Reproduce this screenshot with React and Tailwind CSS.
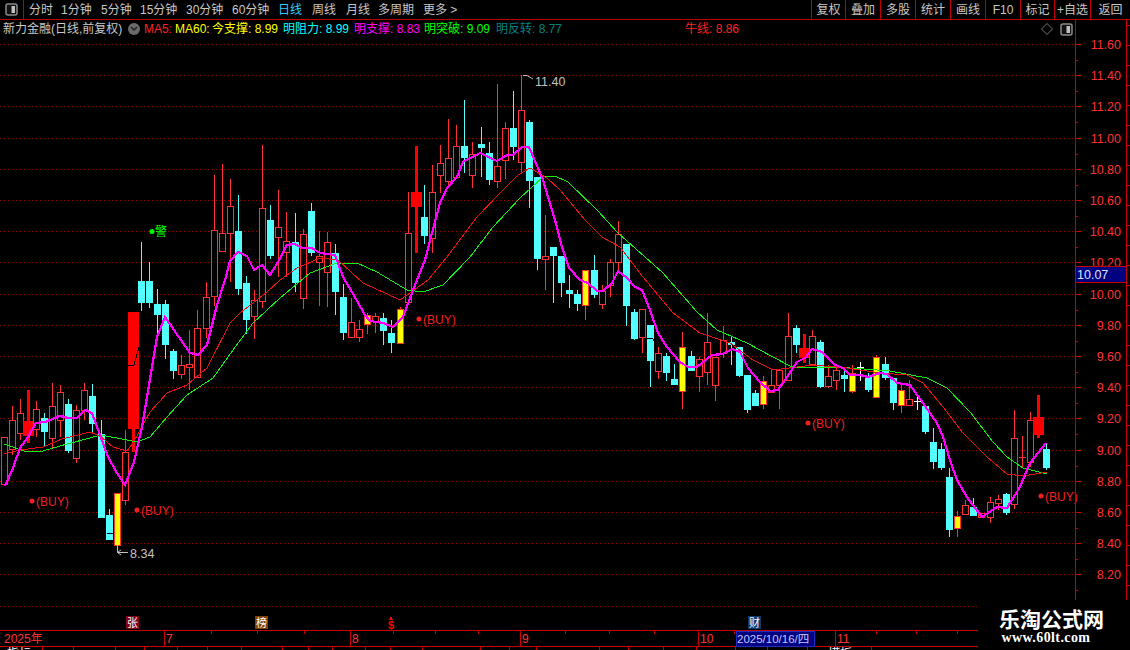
const tabs = [
  ["分时", "w-[32px]", "text-[#c8c8c8]"],
  ["1分钟", "w-[40px]", "text-[#c8c8c8]"],
  ["5分钟", "w-[39px]", "text-[#c8c8c8]"],
  ["15分钟", "w-[46px]", "text-[#c8c8c8]"],
  ["30分钟", "w-[46px]", "text-[#c8c8c8]"],
  ["60分钟", "w-[46px]", "text-[#c8c8c8]"],
  ["日线", "w-[34px]", "text-[#33ccff]"],
  ["周线", "w-[34px]", "text-[#c8c8c8]"],
  ["月线", "w-[32px]", "text-[#c8c8c8]"],
  ["多周期", "w-[45px]", "text-[#c8c8c8]"],
  ["更多 >", "w-[44px]", "text-[#c8c8c8]"],
];

const tools = [
  ["复权", "w-[34px]"],
  ["叠加", "w-[35px]"],
  ["多股", "w-[35px]"],
  ["统计", "w-[35px]"],
  ["画线", "w-[35px]"],
  ["F10", "w-[35px]"],
  ["标记", "w-[34px]"],
  ["+自选", "w-[36px]"],
  ["返回", "w-[40px]"],
];

const legend = [
  ["MA5:", "w-[31px]", "text-[#ff2020]"],
  ["MA60:", "w-[37px]", "text-[#ffff00]"],
  ["今支撑: 8.99", "w-[71px]", "text-[#ffff00]"],
  ["明阻力: 8.99", "w-[71px]", "text-[#00ffff]"],
  ["明支撑: 8.83", "w-[70px]", "text-[#ff00ff]"],
  ["明突破: 9.09", "w-[72px]", "text-[#00ff00]"],
  ["明反转: 8.77", "w-[189px]", "text-[#008080]"],
  ["牛线: 8.86", "w-[100px]", "text-[#ff2020]"],
];

// x, type, high, body top, body bottom, low (page pixels)
const candles = [
  [4, "h", 437, 437, 484, 484], [12, "h", 406, 420, 449, 455], [20, "h", 399, 413, 433, 440],
  [28, "s", 390, 421, 436, 443], [36, "h", 401, 409, 429, 437], [44, "c", 413, 418, 432, 447],
  [52, "h", 383, 406, 438, 448], [60, "h", 385, 392, 420, 437], [68, "c", 399, 404, 451, 453],
  [76, "h", 405, 410, 458, 463], [84, "h", 383, 390, 410, 420], [92, "c", 384, 396, 424, 433],
  [101, "c", 420, 434, 518, 518], [109, "c", 509, 515, 540, 540], [117, "y", 493, 493, 545, 545],
  [125, "h", 430, 452, 500, 505], [133, "s", 312, 312, 429, 452], [141, "c", 242, 281, 303, 311],
  [149, "c", 262, 281, 303, 308], [157, "c", 289, 304, 315, 333], [165, "c", 300, 304, 345, 359],
  [173, "c", 349, 351, 371, 379], [181, "h", 355, 365, 374, 379], [189, "h", 330, 364, 367, 390],
  [197, "h", 310, 328, 377, 377], [206, "h", 282, 297, 328, 338], [214, "h", 175, 230, 296, 306],
  [222, "h", 164, 233, 251, 252], [230, "h", 179, 206, 233, 282], [238, "c", 195, 231, 289, 295],
  [246, "c", 276, 283, 320, 334], [254, "h", 290, 300, 316, 339], [262, "h", 145, 208, 301, 308],
  [270, "c", 205, 220, 256, 259], [278, "h", 190, 227, 237, 277], [286, "h", 212, 241, 252, 277],
  [295, "c", 213, 242, 283, 292], [303, "h", 229, 234, 298, 309], [311, "c", 203, 211, 253, 256],
  [319, "h", 231, 256, 262, 306], [327, "h", 232, 242, 272, 307], [335, "c", 244, 253, 292, 315],
  [343, "c", 284, 297, 333, 340], [351, "h", 298, 322, 337, 337], [359, "h", 320, 329, 337, 342],
  [367, "y", 313, 315, 324, 334], [375, "h", 313, 316, 321, 333], [383, "c", 313, 318, 331, 345],
  [391, "c", 320, 333, 343, 353], [400, "y", 307, 309, 343, 343], [408, "h", 192, 233, 302, 302],
  [416, "s", 146, 192, 207, 253], [424, "c", 185, 217, 236, 244], [432, "h", 165, 192, 238, 253],
  [440, "h", 145, 163, 175, 193], [448, "h", 119, 158, 181, 188], [456, "h", 125, 146, 177, 178],
  [464, "c", 100, 146, 158, 173], [472, "h", 142, 154, 175, 188], [481, "c", 127, 144, 148, 177],
  [489, "c", 142, 153, 180, 185], [497, "h", 84, 166, 181, 188], [505, "h", 122, 128, 160, 179],
  [513, "c", 91, 128, 147, 160], [521, "h", 75, 110, 162, 173], [529, "c", 120, 122, 181, 208],
  [537, "c", 177, 177, 259, 270], [545, "h", 215, 256, 259, 290], [553, "c", 247, 247, 256, 303],
  [561, "c", 256, 256, 283, 297], [569, "c", 275, 290, 294, 308], [577, "c", 290, 294, 304, 311],
  [585, "y", 270, 270, 305, 320], [594, "c", 255, 270, 295, 298], [602, "h", 285, 291, 304, 309],
  [610, "h", 259, 262, 285, 297], [618, "h", 221, 234, 262, 273], [626, "c", 244, 244, 306, 326],
  [634, "c", 309, 312, 339, 340], [642, "h", 309, 309, 337, 353], [650, "c", 325, 325, 361, 387],
  [658, "h", 347, 353, 371, 379], [666, "c", 353, 356, 373, 381], [674, "c", 364, 379, 385, 385],
  [682, "y", 332, 347, 391, 409], [691, "c", 351, 356, 371, 371], [699, "h", 357, 359, 376, 392],
  [707, "h", 313, 342, 372, 385], [715, "h", 357, 357, 385, 401], [723, "h", 326, 340, 353, 358],
  [731, "c", 336, 342, 345, 365], [739, "c", 347, 347, 376, 377], [747, "c", 375, 375, 410, 413],
  [755, "c", 390, 393, 406, 406], [763, "y", 376, 381, 404, 409], [771, "h", 369, 385, 392, 392],
  [779, "h", 369, 370, 385, 409], [788, "h", 313, 336, 380, 380], [796, "c", 325, 328, 345, 353],
  [804, "s", 334, 348, 358, 363], [812, "h", 330, 336, 364, 364], [820, "c", 340, 342, 387, 388],
  [828, "h", 365, 376, 386, 388], [836, "h", 365, 370, 380, 390], [844, "c", 367, 375, 379, 392],
  [852, "y", 365, 373, 391, 393], [860, "w", 362, 367, 367, 381], [868, "c", 373, 376, 390, 392],
  [876, "y", 355, 357, 397, 397], [885, "c", 357, 364, 378, 380], [893, "c", 378, 378, 403, 410],
  [901, "y", 385, 390, 405, 413], [909, "h", 380, 399, 405, 405], [917, "w", 397, 401, 401, 410],
  [925, "c", 405, 406, 432, 434], [933, "c", 428, 442, 462, 469], [941, "c", 443, 449, 468, 470],
  [949, "c", 468, 477, 530, 537], [957, "y", 511, 516, 528, 537], [965, "h", 500, 505, 514, 514],
  [973, "c", 498, 507, 516, 516], [981, "h", 513, 513, 517, 517], [990, "h", 497, 502, 517, 523],
  [998, "h", 495, 499, 503, 510], [1006, "c", 493, 494, 513, 515], [1014, "h", 410, 438, 504, 509],
  [1022, "r", 436, 457, 457, 468], [1030, "h", 412, 420, 462, 467], [1038, "s", 395, 417, 435, 438],
  [1046, "c", 443, 449, 468, 470],
];

const magenta = "5,486 13,468 20,448 28,437 36,423 45,422 60,416 68,418 77,418 85,410 92,413 100,435 108,457 117,473 125,485 134,462 142,427 157,337 165,317 190,353 198,355 207,345 217,305 225,280 230,261 238,252 247,256 254,270 262,265 270,275 278,262 287,245 295,244 302,248 312,248 320,253 335,255 343,277 352,292 365,315 370,321 383,323 393,327 403,317 413,290 425,260 432,233 440,203 447,188 457,177 463,162 480,153 497,161 507,155 513,155 522,147 529,147 543,180 555,220 562,247 569,268 580,280 588,283 597,291 603,291 612,283 618,271 627,278 635,287 642,290 650,310 658,333 667,347 680,362 688,367 697,367 712,355 723,354 732,349 740,352 748,368 760,382 770,391 778,390 787,377 797,362 805,358 812,349 822,352 835,365 843,368 850,375 860,375 868,377 880,373 887,374 897,383 910,385 923,403 937,423 943,437 950,460 957,480 967,497 982,517 997,507 1007,508 1020,487 1030,463 1046,443";
const redLine = "4,454 20,450 43,447 62,439 90,432 100,436 113,447 127,451 133,443 150,412 167,393 187,385 207,368 230,323 240,313 267,292 280,280 297,268 320,258 338,260 363,283 400,300 428,280 447,257 477,217 500,193 518,175 530,168 547,178 560,190 585,220 602,237 620,247 643,277 673,313 700,333 730,343 753,360 773,370 797,367 813,365 847,368 880,373 907,375 923,383 943,407 963,433 987,457 1007,474 1023,476 1047,472";
const greenLine = "4,444 27,452 43,451 67,444 90,438 100,435 117,438 137,442 150,437 167,417 187,395 213,378 233,350 253,323 280,298 310,273 337,263 357,263 377,272 407,290 423,292 443,285 470,257 493,227 520,198 543,177 555,176 568,182 597,210 618,233 663,273 697,312 717,330 747,343 773,357 790,366 800,368 837,367 890,371 927,378 947,388 970,412 993,442 1007,457 1023,468 1047,474";

const buyMarks = [[32, 501], [137, 510], [419, 319], [808, 423], [1041, 496]];
const priceLabels = ["11.60", "11.40", "11.20", "11.00", "10.80", "10.60", "10.40", "10.20", "10.00", "9.80", "9.60", "9.40", "9.20", "9.00", "8.80", "8.60", "8.40", "8.20"];
const gridYs = Array.from({ length: 19 }, (_, i) => Math.round(44 + i * 31.2));

function Candle({ c }) {
  const [x, type, high, top, bottom, low] = c;
  const mid = x + 0.5;
  if (type === "w" || type === "r") {
    const color = type === "w" ? "#ffffff" : "#ff3232";
    return (
      <g stroke={color}>
        <line x1={mid} x2={mid} y1={high} y2={low} />
        <line x1={x - 3} x2={x + 4} y1={top + 0.5} y2={top + 0.5} />
      </g>
    );
  }
  if (type === "s") {
    return (
      <g fill="#ff0000">
        <rect x={x - 1} y={high} width="3" height={low - high} />
        <rect x={x - 5} y={top} width="11" height={bottom - top} />
      </g>
    );
  }
  if (type === "c") {
    return (
      <g>
        <line x1={mid} x2={mid} y1={high} y2={low} stroke="#54ffff" />
        <rect x={x - 3} y={top} width="7" height={bottom - top} fill="#54ffff" />
      </g>
    );
  }
  return (
    <g stroke="#ff3232">
      <line x1={mid} x2={mid} y1={high} y2={top} />
      <line x1={mid} x2={mid} y1={bottom} y2={low} />
      <rect x={x - 2.5} y={top + 0.5} width="6" height={bottom - top} fill={type === "y" ? "#ffff00" : "#000000"} />
    </g>
  );
}

function PanelIcon() {
  return (
    <svg width="13" height="13" viewBox="0 0 13 13">
      <rect x="1" y="1" width="11" height="11" rx="2" fill="#111111" stroke="#8a8a8a" strokeWidth="1.5" />
      <rect x="6.5" y="3" width="3.5" height="7" fill="#c0c0c0" />
    </svg>
  );
}

function Chart() {
  return (
    <svg width="1075" height="592" viewBox="0 38 1075 592" shapeRendering="crispEdges" className="block overflow-visible">
      {gridYs.map((y) => (
        <line key={y} x1="0" x2="1075" y1={y + 0.5} y2={y + 0.5} stroke="#a00000" strokeDasharray="1 3" />
      ))}
      {candles.map((c) => (
        <Candle key={c[0]} c={c} />
      ))}
      <polyline points="128,365 134,365 139,347" fill="none" stroke="#000000" />
      <polyline points="107,533 113,534" fill="none" stroke="#000000" />
      <polyline points="647,338 652,338 656,343" fill="none" stroke="#000000" />
      <polyline points={greenLine} fill="none" stroke="#10ee10" />
      <polyline points={redLine} fill="none" stroke="#e81010" />
      <polyline points={magenta} fill="none" stroke="#ff00ff" strokeWidth="2.2" />

      <g fontSize="12" fontFamily="'Liberation Sans', sans-serif" shapeRendering="auto">
        {buyMarks.map(([x, y]) => (
          <g key={x} fill="#f02020">
            <circle cx={x} cy={y} r="2.5" />
            <text x={x + 4} y={y + 4.5}>(BUY)</text>
          </g>
        ))}
        <path d="M523 75.5 L527 75.5 L533 79" fill="none" stroke="#c0c0c0" />
        <text x="535" y="86" fontSize="12.5" fill="#c0c0c0">11.40</text>
        <path d="M117.5 545 V552.5 H128 M117.5 552.5 L121 550 M117.5 552.5 L121 555" fill="none" stroke="#c0c0c0" />
        <text x="130" y="558" fontSize="12.5" fill="#c0c0c0">8.34</text>
        <circle cx="152" cy="231.5" r="2.5" fill="#00ff00" />
        <text x="155" y="236" fontSize="12" fontFamily="'Noto Sans CJK SC', sans-serif" fill="#00ff00">警</text>
      </g>

      <g fontSize="11" fontFamily="'Noto Sans CJK SC', sans-serif" textAnchor="middle">
        <rect x="126" y="616" width="13" height="13" fill="#80001c" />
        <text x="132.5" y="627" fill="#ffffff">张</text>
        <rect x="255" y="616" width="13" height="13" fill="#7f4000" />
        <text x="261.5" y="627" fill="#ffffff">榜</text>
        <rect x="748" y="616" width="13" height="13" fill="#0a3a70" />
        <text x="754.5" y="627" fill="#ffffff">财</text>
        <path d="M391 616.5 L393.5 620 H388.5 Z" fill="#ff0000" />
        <text x="391" y="628.5" fontWeight="bold" fill="#ff0000" fontFamily="'Liberation Sans', sans-serif">$</text>
      </g>
    </svg>
  );
}

function PriceAxis() {
  const sideTicks = Array.from({ length: 30 }, (_, i) => 25 + i * 20);
  return (
    <svg width="55" height="610" viewBox="1075 20 55 610" shapeRendering="crispEdges" className="block">
      <line x1="1075.5" x2="1075.5" y1="20" y2="630" stroke="#c80000" />
      <line x1="1126.5" x2="1126.5" y1="20" y2="630" stroke="#c80000" />
      {sideTicks.map((y) => (
        <line key={y} x1="1127" x2="1130" y1={y + 0.5} y2={y + 0.5} stroke="#c80000" />
      ))}
      {gridYs.map((y) => (
        <g key={y} stroke="#c80000">
          <line x1="1075" x2="1081" y1={y + 0.5} y2={y + 0.5} />
          <line x1="1075" x2="1078" y1={y + 16.5} y2={y + 16.5} />
        </g>
      ))}
      <g fontSize="12.5" fontFamily="'Liberation Sans', sans-serif" fill="#ff3232" shapeRendering="auto">
        {priceLabels.map((label, i) => (
          <text key={label} x="1121" y={gridYs[i] + 4.5} textAnchor="end">{label}</text>
        ))}
      </g>
      <rect x="1075.5" y="266.5" width="51" height="16" fill="#000080" stroke="#c80000" />
      <text x="1077" y="279" fontSize="12.5" fontFamily="'Liberation Sans', sans-serif" fill="#dfe6ff" shapeRendering="auto">10.07</text>
    </svg>
  );
}

function TimeAxis() {
  const major = [[164, "7", 166], [350, "8", 352], [520, "9", 522], [698, "10", 700], [835, "11", 837]];
  const minor = [211, 257, 304, 393, 435, 478, 565, 609, 654, 734, 876, 916, 957];
  const bottom = [42, 73, 115, 144, 177, 207, 241, 282, 308, 332, 365, 390, 422, 480, 509, 536, 599, 628, 663, 696, 735, 767, 807, 839, 871];
  return (
    <svg width="1130" height="20" viewBox="0 630 1130 20" shapeRendering="crispEdges" className="block">
      <line x1="0" x2="1130" y1="630.5" y2="630.5" stroke="#c80000" />
      <line x1="0" x2="1130" y1="646.5" y2="646.5" stroke="#c80000" />
      {major.map(([x]) => (
        <line key={x} x1={x + 0.5} x2={x + 0.5} y1="631" y2="646" stroke="#c80000" />
      ))}
      {minor.map((x) => (
        <line key={x} x1={x + 0.5} x2={x + 0.5} y1="631" y2="634" stroke="#c80000" />
      ))}
      {bottom.map((x) => (
        <line key={x} x1={x + 0.5} x2={x + 0.5} y1="647" y2="650" stroke="#c80000" />
      ))}
      <rect x="736.5" y="631.5" width="78" height="14.5" fill="#000080" stroke="#1c2cc0" />
      <g fontSize="12" fontFamily="'Liberation Sans', 'Noto Sans CJK SC', sans-serif" fill="#ff3232" shapeRendering="auto">
        <text x="4" y="643">2025年</text>
        {major.map(([x, label, tx]) => (
          <text key={x} x={tx} y="643">{label}</text>
        ))}
        <text x="737" y="643" fill="#c4c8ff" fontSize="11.5">2025/10/16/四</text>
        <text x="7" y="658" fill="#ffffff">指标</text>
        <text x="828" y="658" fill="#ffffff">模板</text>
      </g>
    </svg>
  );
}

export default function App() {
  return (
    <div className="relative h-[650px] w-[1130px] overflow-hidden bg-black font-['Liberation_Sans','Noto_Sans_CJK_SC',sans-serif] text-xs leading-none">
      {/* top toolbar */}
      <div className="flex h-5 items-center border-b border-[#c00000]">
        <div className="flex h-full w-[24px] items-center justify-center border-r border-[#c00000]">
          <PanelIcon />
        </div>
        <div className="ml-[5px] flex">
          {tabs.map(([label, width, color]) => (
            <span key={label} className={`${width} ${color} whitespace-nowrap`}>{label}</span>
          ))}
        </div>
        <div className="ml-auto flex h-full">
          {tools.map(([label, width]) => (
            <span key={label} className={`${width} flex items-center justify-center whitespace-nowrap border-l border-[#c00000] text-[#c8c8c8]`}>
              {label}
            </span>
          ))}
        </div>
      </div>

      <div className="flex">
        <div className="w-[1075px]">
          {/* legend row */}
          <div className="flex h-[18px] items-center pl-[3px] pr-[2px]">
            <span className="w-[124px] whitespace-nowrap text-[#c8c8c8]">新力金融(日线,前复权)</span>
            <span className="ml-[1px] mr-[4px] flex h-[12px] w-[12px] items-center justify-center rounded-full bg-[#6a6a6a]">
              <svg width="8" height="6" viewBox="0 0 8 6">
                <path d="M1 1 L4 4 L7 1" fill="none" stroke="#222222" strokeWidth="1.5" />
              </svg>
            </span>
            {legend.map(([label, width, color]) => (
              <span key={label} className={`${width} ${color} whitespace-nowrap`}>{label}</span>
            ))}
            <svg width="12" height="12" viewBox="0 0 12 12" className="ml-auto">
              <path d="M6 0.5 L11.5 6 L6 11.5 L0.5 6 Z" fill="none" stroke="#777777" />
            </svg>
            <span className="ml-[7px]">
              <PanelIcon />
            </span>
          </div>
          <Chart />
        </div>
        <PriceAxis />
      </div>

      <TimeAxis />

      {/* watermark over the corner */}
      <div className="absolute right-0 top-[600px] flex h-[50px] w-[152px] flex-col items-center bg-black pt-[7px]">
        <span className="pr-[5px] font-['Noto_Sans_CJK_SC',sans-serif] text-[21px] font-bold leading-[22px] text-white">乐淘公式网</span>
        <span className="pr-[16px] font-['Liberation_Serif',serif] text-[14px] font-bold leading-[17px] tracking-[0.4px] text-white">www.60lt.com</span>
      </div>
    </div>
  );
}
